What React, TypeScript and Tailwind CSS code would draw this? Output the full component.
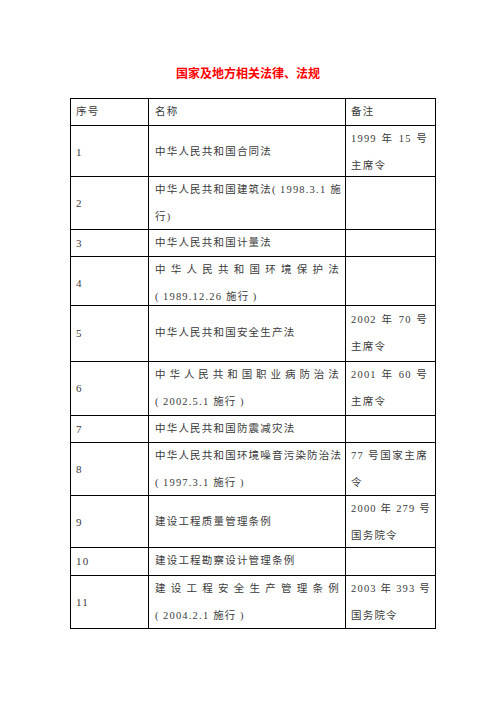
type Line = { t: string; j?: boolean };

type Row = {
  no: string;
  h: string;
  name: Line[];
  note?: Line[];
};

const rows: Row[] = [
  {
    no: "1",
    h: "h-[51px]",
    name: [{ t: "中华人民共和国合同法" }],
    note: [{ t: "1999 年 15 号", j: true }, { t: "主席令" }],
  },
  {
    no: "2",
    h: "h-[53px]",
    name: [{ t: "中华人民共和国建筑法(\u20091998.3.1 施", j: true }, { t: "行)" }],
  },
  { no: "3", h: "h-[27px]", name: [{ t: "中华人民共和国计量法" }] },
  {
    no: "4",
    h: "h-[49px]",
    name: [{ t: "中华人民共和国环境保护法", j: true }, { t: "(\u20091989.12.26 施行\u2009)" }],
  },
  {
    no: "5",
    h: "h-[56px]",
    name: [{ t: "中华人民共和国安全生产法" }],
    note: [{ t: "2002 年 70 号", j: true }, { t: "主席令" }],
  },
  {
    no: "6",
    h: "h-[54px]",
    name: [{ t: "中华人民共和国职业病防治法", j: true }, { t: "(\u20092002.5.1 施行\u2009)" }],
    note: [{ t: "2001 年 60 号", j: true }, { t: "主席令" }],
  },
  { no: "7", h: "h-[27px]", name: [{ t: "中华人民共和国防震减灾法" }] },
  {
    no: "8",
    h: "h-[53px]",
    name: [{ t: "中华人民共和国环境噪音污染防治法", j: true }, { t: "(\u20091997.3.1 施行\u2009)" }],
    note: [{ t: "77 号国家主席", j: true }, { t: "令" }],
  },
  {
    no: "9",
    h: "h-[52px]",
    name: [{ t: "建设工程质量管理条例" }],
    note: [{ t: "2000 年 279 号", j: true }, { t: "国务院令" }],
  },
  { no: "10", h: "h-[28px]", name: [{ t: "建设工程勘察设计管理条例" }] },
  {
    no: "11",
    h: "h-[53px]",
    name: [{ t: "建设工程安全生产管理条例", j: true }, { t: "(\u20092004.2.1 施行\u2009)" }],
    note: [{ t: "2003 年 393 号", j: true }, { t: "国务院令" }],
  },
];

function Lines({ lines }: { lines: Line[] }) {
  return (
    <div className="w-full">
      {lines.map((l, i) => (
        <div
          key={i}
          className={
            l.j
              ? "text-justify [text-align-last:justify] whitespace-nowrap"
              : "whitespace-nowrap"
          }
        >
          {l.t}
        </div>
      ))}
    </div>
  );
}

export default function App() {
  return (
    <main className="min-h-screen w-[496px] bg-white pt-[63px] font-['Liberation_Serif','Noto_Sans_CJK_SC',serif]">
      <h1 className="text-center text-[12px] leading-[20px] font-bold text-[#ff0000] font-['Noto_Sans_CJK_SC',sans-serif]">
        国家及地方相关法律、法规
      </h1>

      <div className="mt-[15px] ml-[70px] w-[366px] border-l border-t border-black text-[10.5px] leading-[26.5px] tracking-[1.2px] text-[#3a3a3a]">
        <div className="grid h-[27px] grid-cols-[78px_197px_90px] border-b border-black">
          <div className="flex items-center border-r border-black pl-[5px]">序号</div>
          <div className="flex items-center border-r border-black pl-[6px]">名称</div>
          <div className="flex items-center border-r border-black pl-[5px]">备注</div>
        </div>

        {rows.map((r) => (
          <div
            key={r.no}
            className={`grid grid-cols-[78px_197px_90px] border-b border-black ${r.h}`}
          >
            <div className="flex items-center border-r border-black pl-[5px] text-[11px]">{r.no}</div>
            <div className="flex items-center border-r border-black pl-[6px] pr-[5px]">
              <Lines lines={r.name} />
            </div>
            <div className="flex items-center border-r border-black pl-[5px] pr-[7px]">
              {r.note ? <Lines lines={r.note} /> : null}
            </div>
          </div>
        ))}
      </div>
    </main>
  );
}
